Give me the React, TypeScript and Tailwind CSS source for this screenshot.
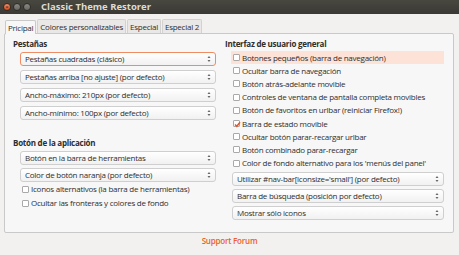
import React from "react";

const font = { fontFamily: '"Open Sans", "DejaVu Sans", sans-serif' };

function Arrow() {
  return (
    <svg width="4" height="8" viewBox="0 0 4 8" className="shrink-0">
      <path d="M0.5 3 L2 1 L3.5 3 Z" fill="#666666" />
      <path d="M0.5 5 L2 7 L3.5 5 Z" fill="#666666" />
    </svg>
  );
}

const txt = "text-[8px] leading-none text-[#2e2e2e] whitespace-nowrap tracking-[-0.25px]";

function Select({ label, focused = false }: { label: string; focused?: boolean }) {
  return (
    <div
      className={`h-[14px] flex items-center justify-between pl-[4px] pr-[4px] rounded-[3px] border bg-gradient-to-b from-[#ffffff] to-[#f1f1f1] ${
        focused ? "border-[#f08c64]" : "border-[#cfcfcf]"
      }`}
    >
      <span className={txt}>{label}</span>
      <Arrow />
    </div>
  );
}

function Check({
  label,
  checked = false,
  highlight = false,
  h = "h-[13.2px]",
}: {
  label: string;
  checked?: boolean;
  highlight?: boolean;
  h?: string;
}) {
  return (
    <div className={`${h} flex items-center gap-[2px] pl-[2px] ${highlight ? "bg-[#fde2d8]" : ""}`}>
      <div className="w-[7px] h-[7px] rounded-[1px] border border-[#a9a9a9] bg-white relative shrink-0">
        {checked && (
          <svg width="7" height="7" viewBox="0 0 7 7" className="absolute left-[-0.5px] top-[-0.5px]">
            <path d="M1 3.5 L2.8 5.3 L6 1.2" stroke="#e4572e" strokeWidth="1.5" fill="none" />
          </svg>
        )}
      </div>
      <span className={txt}>{label}</span>
    </div>
  );
}

function Tab({ label, active = false }: { label: string; active?: boolean }) {
  return (
    <div
      className={`h-[14px] px-[2px] flex items-center border border-b-0 rounded-t-[2px] ${
        active ? "bg-[#f7f7f7] border-[#c9c9c9] relative top-[1px] z-10" : "bg-[#e9e8e6] border-[#d3d2d0]"
      }`}
    >
      <span className={txt}>{label}</span>
    </div>
  );
}

const head = "text-[8px] font-bold leading-none text-[#2e2e2e] h-[10px] flex items-center tracking-[-0.25px] whitespace-nowrap";

export default function App() {
  return (
    <div style={font} className="w-[459px] h-[255px] bg-[#f2f1f0] flex flex-col overflow-hidden">
      {/* title bar */}
      <div className="h-[14px] bg-gradient-to-b from-[#48473f] to-[#3a3935] flex items-center shrink-0">
        <div className="flex items-center gap-[2px] pl-[3px]">
          <div className="w-[8px] h-[8px] rounded-full bg-gradient-to-b from-[#f58b60] to-[#df4a16] border border-[#3a2a20] flex items-center justify-center">
            <span className="text-[6px] leading-none text-[#3c3b37] font-bold">×</span>
          </div>
          <div className="w-[8px] h-[8px] rounded-full bg-gradient-to-b from-[#8a8984] to-[#6a6964] border border-[#2e2d2a]" />
          <div className="w-[8px] h-[8px] rounded-full bg-gradient-to-b from-[#8a8984] to-[#6a6964] border border-[#2e2d2a]" />
        </div>
        <span className="ml-[10px] text-[9.5px] font-bold text-[#dfdbd2] leading-none">Classic Theme Restorer</span>
      </div>

      {/* tabs */}
      <div className="flex pl-[5px] mt-[5px] h-[14px] items-end gap-[1px]">
        <Tab label="Pricipal" active />
        <Tab label="Colores personalizables" />
        <Tab label="Especial" />
        <Tab label="Especial 2" />
      </div>

      {/* panel */}
      <div className="ml-[4px] w-[450px] h-[200px] bg-[#f7f7f7] border border-[#c9c9c9] rounded-[2px] flex">
        {/* left column */}
        <div className="w-[211px] pl-[8px] pt-[5px] flex flex-col shrink-0">
          <div className={head}>Pestañas</div>
          <div className="pl-[7px] mt-[3px] flex flex-col gap-[4px]">
            <Select label="Pestañas cuadradas (clásico)" focused />
            <Select label="Pestañas arriba [no ajuste] (por defecto)" />
            <Select label="Ancho-máximo: 210px (por defecto)" />
            <Select label="Ancho-mínimo: 100px (por defecto)" />
          </div>
          <div className={`mt-[17.5px] ${head}`}>Botón de la aplicación</div>
          <div className="pl-[7px] mt-[3.5px] flex flex-col gap-[3px]">
            <Select label="Botón en la barra de herramientas" />
            <Select label="Color de botón naranja (por defecto)" />
          </div>
          <div className="pl-[7px] flex flex-col">
            <Check label="Iconos alternativos (la barra de herramientas)" h="h-[14px]" />
            <Check label="Ocultar las fronteras y colores de fondo" h="h-[14px]" />
          </div>
        </div>

        {/* right column */}
        <div className="flex-1 pl-[9px] pt-[5px] pr-[9px] flex flex-col">
          <div className={head}>Interfaz de usuario general</div>
          <div className="pl-[6px] mt-[2px] flex flex-col">
            <Check label="Botones pequeños (barra de navegación)" highlight />
            <Check label="Ocultar barra de navegación" />
            <Check label="Botón atrás-adelante movible" />
            <Check label="Controles de ventana de pantalla completa movibles" />
            <Check label="Botón de favoritos en urlbar (reiniciar Firefox!)" />
            <Check label="Barra de estado movible" checked />
            <Check label="Ocultar botón parar-recargar urlbar" />
            <Check label="Botón combinado parar-recargar" />
            <Check label="Color de fondo alternativo para los 'menús del panel'" />
          </div>
          <div className="pl-[7px] mt-[2px] flex flex-col gap-[3px]">
            <Select label="Utilizar #nav-bar[iconsize='small'] (por defecto)" />
            <Select label="Barra de búsqueda (posición por defecto)" />
            <Select label="Mostrar sólo iconos" />
          </div>
        </div>
      </div>

      <div className="flex justify-center mt-[4px]">
        <span className="text-[8px] font-semibold text-[#e9602c] leading-none tracking-[-0.2px]">Support Forum</span>
      </div>
    </div>
  );
}
